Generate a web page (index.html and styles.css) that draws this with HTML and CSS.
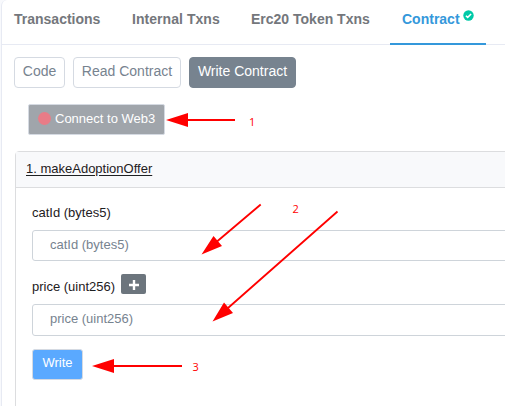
FILE: index.html
```
<!DOCTYPE html>
<html lang="en">
<head>
<meta charset="utf-8">
<title>Contract</title>
<link rel="stylesheet" href="styles.css">
</head>
<body>
<main class="panel">
  <nav class="tabs">
    <a class="tab tab-tx">Transactions</a>
    <a class="tab tab-internal">Internal Txns</a>
    <a class="tab tab-erc">Erc20 Token Txns</a>
    <a class="tab tab-contract active"><span>Contract</span><svg class="check" viewBox="0 0 11 11"><circle cx="5.5" cy="5.5" r="5.2" fill="#00c9a7"/><path d="M2.9 5.7 4.7 7.4 8.1 4" fill="none" stroke="#fff" stroke-width="1.5"/></svg></a>
  </nav>
  <div class="modes">
    <button class="btn code">Code</button>
    <button class="btn read">Read Contract</button>
    <button class="btn write-mode">Write Contract</button>
  </div>
  <button class="connect"><i class="dot"></i><span>Connect to Web3</span></button>
  <section class="card">
    <header class="card-header"><a>1. makeAdoptionOffer</a></header>
    <div class="card-body">
      <label class="label">catId (bytes5)</label>
      <input class="field" placeholder="catId (bytes5)">
      <div class="label label-price"><label>price (uint256)</label><button class="plus"><svg viewBox="0 0 25 20"><path d="M13 6v10M8 11h10" stroke="#fff" stroke-width="2.4"/></svg></button></div>
      <input class="field field-price" placeholder="price (uint256)">
      <button class="submit">Write</button>
    </div>
  </section>
</main>
<svg class="notes" viewBox="0 0 505 406">
  <g stroke="#f00" stroke-width="2" fill="none">
    <path d="M235 120H187M182 366H113"/>
    <path stroke-width="1.8" d="M260.700 204.500 217 241.500M337.500 211.500 228 308"/>
  </g>
  <g fill="#f00">
    <path d="M166 120 188 113V127ZM92 366 114 359V373Z"/>
    <path d="M201.500 254.500 213.500 236 222 246ZM212.500 321.500 224 302.500 233 313Z"/>
  </g>
  <g class="note-text">
    <text x="249" y="126">1</text>
    <text x="292.500" y="213">2</text>
    <text x="192.500" y="371">3</text>
  </g>
</svg>
</body>
</html>
```
FILE: styles.css
```
* { box-sizing: border-box; }
body {
  margin: 0;
  width: 505px;
  height: 406px;
  overflow: hidden;
  background: #f8f9fc;
  font-family: "Liberation Sans", Arial, sans-serif;
  color: #1e2022;
}
button { font-family: inherit; padding: 0; margin: 0; white-space: nowrap; }
.panel {
  margin-left: 1px;
  height: 406px;
  overflow: hidden;
  border-left: 1px solid #e7eaf3;
  border-top-left-radius: 6px;
  background: #fff;
}
.tabs {
  display: flex;
  height: 45px;
  border-bottom: 1px solid #e7eaf3;
}
.tab {
  flex-shrink: 0;
  height: 45px;
  padding: 10px 0 0 12px;
  font-size: 14px;
  font-weight: 700;
  line-height: 18px;
  color: #74777c;
  white-space: nowrap;
}
.tab-tx { width: 118px; }
.tab-internal { width: 119px; letter-spacing: 0.05px; }
.tab-erc { width: 151px; }
.tab-contract { width: 96px; }
.active { display: flex; color: #3498db; border-bottom: 2px solid #3498db; }
.check { width: 11px; height: 11px; margin-left: 3px; }
.modes { display: flex; gap: 8px; padding: 12px 0 0 12px; }
.btn {
  height: 31px;
  padding-bottom: 3px;
  border: 1px solid #d5dae2;
  border-radius: 4px;
  background: #fff;
  color: #77838f;
  font-size: 14px;
}
.code { width: 51px; }
.read { width: 108px; }
.write-mode { width: 107px; background: #77838f; border-color: #77838f; color: #fff; }
.connect {
  display: flex;
  align-items: center;
  width: 137px;
  height: 31px;
  margin: 16px 0 0 26px;
  padding: 0 0 3px 9px;
  border: 1px solid #d5dae2;
  border-radius: 2px;
  background: #a0a5ab;
  color: #fff;
  font-size: 13px;
}
.dot { width: 13px; height: 13px; margin-right: 4px; border-radius: 50%; background: #e97c87; }
.card {
  height: 270px;
  margin: 16px -15px 0 13px;
  border: 1px solid #dcdddf;
  border-radius: 4px;
}
.card-header {
  height: 36px;
  padding: 9px 0 0 10px;
  border-bottom: 1px solid #dcdddf;
  background: #f8f9fb;
  font-size: 13px;
  line-height: 16px;
}
.card-header a { text-decoration: underline; text-underline-offset: 2px; }
.card-body { padding: 17px 0 0 16px; }
.label { display: block; height: 25px; font-size: 13px; line-height: 16px; }
.field {
  display: block;
  width: 100%;
  height: 31px;
  padding: 0 17px 2px;
  border: 1px solid #ced4da;
  border-radius: 3px;
  font: 13px "Liberation Sans", Arial, sans-serif;
}
.field::placeholder { color: #77838f; opacity: 1; }
.label-price { display: flex; height: 30px; margin-top: 13px; padding-top: 5px; }
.plus {
  width: 25px;
  height: 20px;
  margin: -5px 0 0 6px;
  border: 0;
  border-radius: 2px;
  background: #6c757d;
}
.plus svg { display: block; width: 25px; height: 20px; }
.field-price { height: 32px; padding-bottom: 4px; }
.submit {
  width: 51px;
  height: 31px;
  margin-top: 13px;
  padding-bottom: 5px;
  border: 1px solid #d5dae2;
  border-radius: 3px;
  background: #5aa9ff;
  color: #fff;
  font-size: 13px;
}
.notes { position: absolute; left: 0; top: 0; width: 505px; height: 406px; pointer-events: none; }
.note-text { fill: #f00; font: 11px "Open Sans", sans-serif; }
```
